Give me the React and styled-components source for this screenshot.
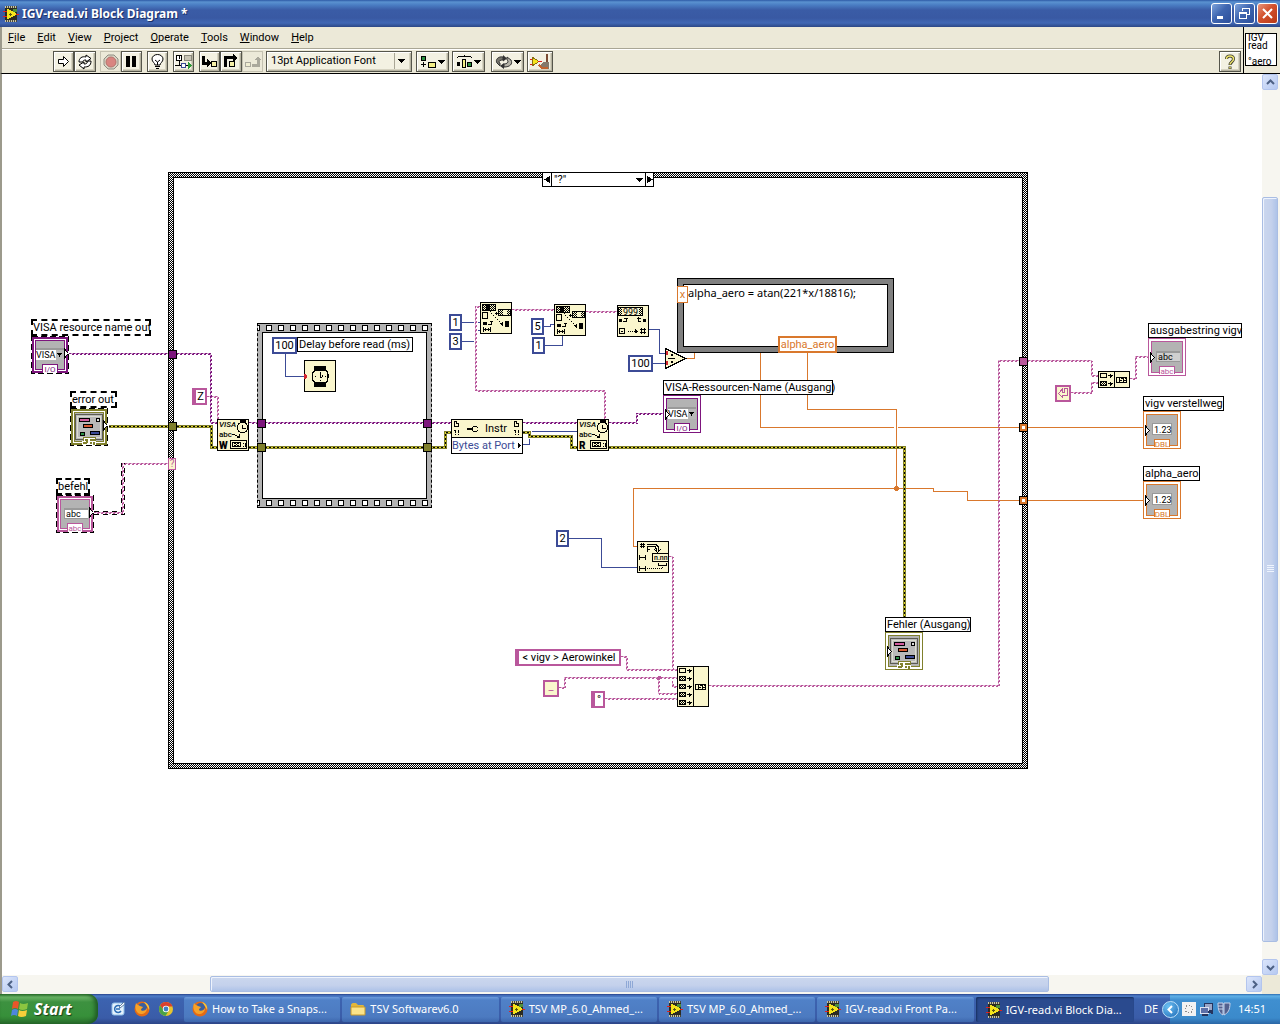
import styled, { createGlobalStyle, css } from 'styled-components';

const PINK = '#b9579c';
const PURPLE = '#7d157d';
const BLUE = '#3c4b96';
const ORANGE = '#d9782d';
const OLIVE = '#80802c';
const CREAM = '#faf6cd';
const UI_FONT = 'Roboto, sans-serif';
const WIDE_FONT = '"Noto Sans", sans-serif';

// the diagram uses window coordinates, the canvas starts here
const ORIGIN = { x: 2, y: 74 };

const GlobalStyle = createGlobalStyle`
  * { box-sizing: border-box; }
  body {
    margin: 0;
    font: 11px/14px ${UI_FONT};
    color: #000;
    overflow: hidden;
  }
  button, select { font: inherit; color: inherit; margin: 0; padding: 0; }
  svg { display: block; flex: none; }
`;

const Desktop = styled.div`
  display: flex;
  flex-direction: column;
  height: 100vh;
  background: #ece9d8;
`;

/* ---------- title bar ---------- */

const TitleBar = styled.header`
  display: flex;
  align-items: center;
  height: 27px;
  flex: none;
  padding: 0 2px 0 3px;
  background: linear-gradient(#2d5aa6 0, #5a92d0 2px, #4a7dc3 5px, #3a5ca6 10px, #3959a3 18px, #4067b4 23px, #2c4786 100%);
`;
const Title = styled.h1`
  flex: 1;
  margin: 0 0 0 3px;
  font: bold 12px/20px ${WIDE_FONT};
  color: #fff;
  text-shadow: 1px 1px #1b2f66;
`;
const WindowButton = styled.button`
  width: 21px;
  height: 21px;
  margin-left: 2px;
  border: 1px solid #fff;
  border-radius: 3px;
  display: grid;
  place-items: center;
  background: ${p => p.$close
    ? 'linear-gradient(135deg, #e8957c, #d2502c 45%, #b83a17)'
    : 'linear-gradient(135deg, #7ea4dc, #3f66b0 45%, #2c4f9b)'};
`;

/* ---------- menu and tool bar ---------- */

const Bars = styled.div`
  display: flex;
  flex: none;
  height: 47px;
  border-bottom: 1px solid #000;
  border-left: 2px solid #9c9a8c;
  background: #ece9d8;
`;
const BarColumn = styled.div`
  flex: 1;
`;
const MenuBar = styled.nav`
  display: flex;
  align-items: center;
  gap: 12px;
  height: 22px;
  padding: 0 6px;
  border-bottom: 1px solid #a9a695;
`;
const MenuItem = styled.button`
  border: 0;
  background: none;
  &::first-letter { text-decoration: underline; }
`;
const ToolBar = styled.div`
  display: flex;
  align-items: center;
  height: 24px;
  padding: 0 2px 0 51px;
  border-top: 1px solid #fff;
`;
const ToolButton = styled.button`
  display: flex;
  align-items: center;
  justify-content: center;
  width: ${p => p.$w || 21}px;
  height: 21px;
  margin-left: ${p => p.$gap || 0}px;
  border: 1px solid #55554b;
  background: #f3f1e2;
  box-shadow: inset 1px 1px #fff, inset -1px -1px #b5b2a0, inset -2px -2px #d6d3c1;
  ${p => p.$off && css`
    border-color: #c4c1b0;
    background: #ece9d8;
    box-shadow: none;
  `}
`;
const FontBox = styled.span`
  position: relative;
  display: flex;
  width: 146px;
  height: 21px;
  margin: 0 4px 0 3px;
  svg { position: absolute; right: 7px; top: 8px; }
`;
const FontSelect = styled.select`
  appearance: none;
  flex: 1;
  padding: 0 4px 1px;
  border: 1px solid #55554b;
  border-radius: 0;
  background: linear-gradient(90deg, #f3f1e2 127px, #a9a695 127px, #a9a695 128px, #f3f1e2 128px);
  box-shadow: inset 1px 1px #fff, inset -1px -1px #b5b2a0, inset -2px -2px #d6d3c1;
`;
const Spacer = styled.div`
  flex: 1;
`;
const ViIconPane = styled.div`
  width: 37px;
  padding: 6px 2px 0 1px;
  border-left: 1px solid #000;
`;
const ViIcon = styled.div`
  width: 32px;
  height: 33px;
  padding-left: 2px;
  border: 1px solid #000;
  background: #fff;
  font-size: 10px;
  line-height: 8px;
  white-space: pre;
`;

/* ---------- canvas and scroll bars ---------- */

const Workspace = styled.main`
  flex: 1;
  min-height: 0;
  display: grid;
  grid-template: minmax(0, 1fr) 19px / minmax(0, 1fr) 18px;
  border-left: 2px solid #9c9a8c;
`;
const Canvas = styled.section`
  position: relative;
  overflow: hidden;
  background: #fff;
`;
const ScrollBar = styled.div`
  display: flex;
  flex-direction: ${p => (p.$vertical ? 'column' : 'row')};
  padding: ${p => (p.$vertical ? '0 2px 0 0' : '1px 0 2px')};
  background: #f7f6f0;
`;
const ScrollButton = styled.button`
  flex: 0 0 16px;
  display: grid;
  place-items: center;
  border: 1px solid #b3c5ee;
  border-radius: 2px;
  background: linear-gradient(135deg, #dbe5fb, #b6c9f1);
`;
const Track = styled.div`
  flex: ${p => p.$grow} 0 0;
`;
const Thumb = styled.div`
  flex: ${p => p.$grow} 0 0;
  display: grid;
  place-items: center;
  border: 1px solid #a9bde3;
  border-radius: 2px;
  box-shadow: inset 1px 1px #eef3fd;
  background: linear-gradient(${p => (p.$vertical ? '90deg' : '180deg')}, #cbd7ee, #c4d1ec 60%, #aec3e8);
`;

/* ---------- diagram parts ---------- */

const place = css`
  position: absolute;
  left: ${p => p.$x - ORIGIN.x}px;
  top: ${p => p.$y - ORIGIN.y}px;
`;
const WireLayer = styled.svg`
  position: absolute;
  left: 0;
  top: 0;
  shape-rendering: crispEdges;
`;
const Node = styled.div`
  ${place}
`;
const Tag = styled.div`
  width: ${p => p.$w}px;
  height: ${p => (p.$selected ? 17 : 15)}px;
  padding-left: 1px;
  border: ${p => (p.$selected ? '2px dashed' : '1px solid')} #000;
  background: #fff;
  line-height: 13px;
  white-space: nowrap;
  ${p => p.$selected && css`
    padding-left: 0;
  `}
`;
const Placed = styled(Tag)`
  ${place}
`;
const Constant = styled.div`
  ${place}
  width: ${p => p.$w}px;
  height: 17px;
  border: 2px solid ${p => p.$color};
  border-left-width: ${p => (p.$string ? 4 : 2)}px;
  background: ${p => (p.$cream ? CREAM : '#fff')};
  color: ${p => (p.$cream ? p.$color : '#000')};
  line-height: ${p => (p.$cream ? 9 : 13)}px;
  text-align: center;
  white-space: nowrap;
`;
const Tunnel = styled.div`
  ${place}
  width: 9px;
  height: 9px;
  border: 1px solid #000;
  background: ${p => p.$color};
  ${p => p.$hollow && css`
    box-shadow: inset 0 0 0 2px ${p.$color};
    background: #fff;
  `}
`;
const Selector = styled.div`
  ${place}
  width: 8px;
  height: 12px;
  border: 1px solid ${PINK};
  background: ${CREAM};
  color: ${PINK};
  font-size: 10px;
  line-height: 10px;
  text-align: center;
`;
const CaseFrame = styled.div`
  ${place}
  width: 860px;
  height: 597px;
  padding: 4px;
  border: 1px solid #000;
  background: repeating-conic-gradient(#000 0 25%, #fff 0 50%) 0 0 / 2px 2px;
`;
const CaseBody = styled.div`
  height: 100%;
  border: 1px solid #000;
  background: #fff;
`;
const CaseBar = styled.div`
  ${place}
  display: flex;
  width: 112px;
  height: 15px;
  border: 1px solid #000;
  background: #fff;
  svg { pointer-events: none; }
`;
const CaseStep = styled.button`
  width: 8px;
  border: 0;
  border-left: ${p => (p.$next ? '1px solid #000' : 0)};
  background: #fff;
  display: grid;
  place-items: center;
`;
const CaseSelect = styled.select`
  appearance: none;
  flex: 1;
  min-width: 0;
  padding: 0 2px;
  border: 0;
  border-left: 1px solid #000;
  border-radius: 0;
  background: transparent;
  line-height: 13px;
`;
const CaseDrop = styled.span`
  display: grid;
  place-items: center;
  width: 11px;
`;
const SequenceFrame = styled.div`
  ${place}
  display: flex;
  flex-direction: column;
  width: 175px;
  height: 185px;
  border: 1px solid #000;
  border-left-style: dashed;
  border-right-style: dashed;
  background: #b3b3b3;
`;
const SequenceBody = styled.div`
  flex: 1;
  margin: 0 4px;
  border: 1px solid #000;
  background: #fff;
`;
const FormulaNode = styled.div`
  ${place}
  width: 217px;
  height: 75px;
  padding: 5px;
  border: 1px solid #000;
  background: #808080;
`;
const FormulaText = styled.div`
  height: 100%;
  padding: 1px 4px;
  border: 1px solid #000;
  background: #fff;
  font-family: ${WIDE_FONT};
`;
const Variable = styled.div`
  ${place}
  width: ${p => p.$w}px;
  height: 17px;
  border: ${p => p.$line}px solid ${ORANGE};
  background: #fff;
  color: ${ORANGE};
  line-height: ${p => 17 - p.$line * 2}px;
  text-align: center;
`;
const PropertyNode = styled.div`
  ${place}
  width: 72px;
  border: 1px solid #000;
  background: #fff;
`;
const PropertyHead = styled.div`
  display: flex;
  align-items: center;
  justify-content: space-between;
  height: 18px;
  padding: 0 2px;
  border-bottom: 1px solid #000;
  background: ${CREAM};
`;
const PropertyRow = styled.div`
  display: flex;
  align-items: center;
  justify-content: space-between;
  height: 15px;
  padding-right: 1px;
  color: ${BLUE};
  white-space: nowrap;
`;

/* ---------- task bar ---------- */

const TaskBar = styled.footer`
  flex: none;
  display: flex;
  height: 30px;
  font-family: ${WIDE_FONT};
  background: linear-gradient(#27428a 0, #4d7dc8 2px, #3c63b0 5px, #3a5ca8 24px, #2c4587 100%);
`;
const StartButton = styled.button`
  display: flex;
  align-items: center;
  gap: 4px;
  width: 98px;
  padding-left: 10px;
  border: 0;
  border-radius: 0 10px 10px 0;
  background: linear-gradient(#2f7a2f 0, #6cb567 3px, #3d9140 8px, #37903a 22px, #2a6e2c 100%);
  box-shadow: inset -3px 0 4px #1f5a24;
  color: #fff;
  font: italic bold 16px/24px ${WIDE_FONT};
  text-shadow: 1px 1px 1px #163f18;
`;
const QuickLaunch = styled.div`
  display: flex;
  align-items: center;
  gap: 8px;
  width: 86px;
  padding-left: 12px;
`;
const Tasks = styled.div`
  flex: 1;
  display: flex;
  gap: 2px;
  padding: 3px 0 2px;
`;
const Task = styled.button`
  flex: 1 0 0;
  min-width: 0;
  display: flex;
  align-items: center;
  gap: 4px;
  padding: 0 8px 1px;
  border: 0;
  border-radius: 2px;
  background: linear-gradient(#6d9bdb 0, #5081c8 3px, #4c7ac0 20px, #3d67ad 100%);
  color: #fff;
  white-space: nowrap;
  ${p => p.$active && css`
    background: #2a4a8e;
    box-shadow: inset 1px 1px 2px #17305f;
    padding-top: 2px;
    padding-left: 10px;
  `}
`;
const Language = styled.div`
  width: 36px;
  padding-left: 10px;
  color: #fff;
  line-height: 30px;
`;
const Tray = styled.div`
  display: flex;
  align-items: center;
  width: 110px;
  gap: 3px;
  padding-right: 14px;
  background: linear-gradient(#2c6bb0 0, #5fb0e6 2px, #3f8fd0 6px, #3b8acb 24px, #2a66a5 100%);
  color: #fff;
`;
const TrayToggle = styled.button`
  width: 17px;
  height: 17px;
  margin: 0 0 0 -8px;
  border: 1px solid #bfe2fa;
  border-radius: 50%;
  background: radial-gradient(circle at 35% 30%, #6cc0f2, #1e6cb8);
  display: grid;
  place-items: center;
`;
const Clock = styled.time`
  margin-left: auto;
`;

/* ---------- small drawings ---------- */

const Icon = ({ w = 16, h = w, vb, children, smooth }) => (
  <svg width={w} height={h} viewBox={vb || `0 0 ${w} ${h}`} fill="none" shapeRendering={smooth ? 'auto' : 'crispEdges'}>
    {children}
  </svg>
);

const Down = ({ w = 7 }) => (
  <svg width={w} height="4" viewBox="0 0 7 4" shapeRendering="crispEdges"><path d="M0 0h7v1h-1v1h-1v1h-1v1h-1v-1h-1v-1h-1v-1h-1z" /></svg>
);

const LabViewIcon = () => (
  <Icon w={16}>
    <path d="M2 2h12v12h-12z" fill="#2b2b22" />
    <path d="M2 1h12M2 15h12" stroke="#4a483a" strokeWidth="2" />
    <path d="M2 1h12M2 15h12" stroke="#c9c4a4" strokeWidth="2" strokeDasharray="1 1" />
    <path d="M10 3h4v3h-4z" fill="#4e8f3c" />
    <path d="M4 3h2v1h2v1h2v1h2v1h1v2h-1v1h-2v1h-2v1h-2v1h-2z" fill="#f5e51b" />
    <path d="M0 5.500h4M0 10.500h4M13 8.500h3" stroke="#e0211b" />
    <path d="M6 8.500h3M7.500 7v3" stroke="#5a5410" />
  </Icon>
);

const Firefox = () => (
  <Icon w={16} smooth>
    <circle cx="8" cy="8" r="7.500" fill="#e26a16" />
    <circle cx="8.500" cy="6.500" r="4.500" fill="#3b5f9f" />
    <path d="M2 2c1 2 3 2 4 3l3 1c-1 2-2 1-2 3 2 2 5 0 6-2 0 4-3 6-6 6-4 0-7-5-5-11z" fill="#f5a32a" />
    <path d="M10 1c4 1 6 5 5 8-1-3-3-5-5-8z" fill="#f7c63d" />
  </Icon>
);

const Chrome = () => (
  <Icon w={16} smooth>
    <circle cx="8" cy="8" r="7" fill="#e8c52e" />
    <path d="M2 4.500a7 7 0 0 1 12.500 1h-6.500l-2 4z" fill="#d8402f" />
    <path d="M2 4.500a7 7 0 0 0 5.500 10.500l3-5h-4z" fill="#4ba247" />
    <circle cx="8" cy="8" r="3.200" fill="#fff" />
    <circle cx="8" cy="8" r="2.400" fill="#3f7fc4" />
  </Icon>
);

const Folder = () => (
  <Icon w={16} smooth>
    <path d="M1 4c0-1 1-2 2-2h3l2 2h5c1 0 1 1 1 2v8h-13z" fill="#e2b63a" />
    <path d="M1 14v-8h14v8z" fill="#fbe48a" stroke="#c79a2b" />
  </Icon>
);

const QuickNote = () => (
  <Icon w={16} smooth>
    <rect x="2" y="2" width="12" height="12" rx="2" fill="#e4f1fc" stroke="#8fbfe8" />
    <path d="M11 6a3.500 3.500 0 1 0 0 4M6 8h4" stroke="#2b6cb5" strokeWidth="1.500" />
    <path d="M9 6l5-5 1 2-5 4z" fill="#fff" stroke="#5d7fa8" />
  </Icon>
);

const WindowsFlag = () => (
  <Icon w={20} smooth>
    <path d="M3 3q3-2 6 0l-1 7q-3-2-6 0z" fill="#e8562a" />
    <path d="M10 4q3 2 8 0l-1 6q-5 2-8 0z" fill="#8cc540" />
    <path d="M2 11q3-2 6 0l-1 6q-3-2-6 0z" fill="#4f86dd" />
    <path d="M9 11q3 2 8 0l-1 6q-5 2-8 0z" fill="#f6cf3a" />
  </Icon>
);

const Chevron = ({ turn }) => (
  <svg width="9" height="9" viewBox="0 0 9 9" fill="none">
    <path d="M6 1L2.500 4.500L6 8" stroke="#4d6185" strokeWidth="2" transform={`rotate(${turn} 4.500 4.500)`} />
  </svg>
);

/* ---------- wires ---------- */

// string and VISA wires: two dashed rows, one pixel apart
const Braid = ({ d, color }) => (
  <g fill="none" stroke={color}>
    <path d={d} strokeDasharray="2 2" />
    <path d={d} transform="translate(1 1)" strokeDasharray="2 2" strokeDashoffset="2" />
    <path d={d} strokeOpacity="0.450" />
  </g>
);

const ErrorWire = ({ d }) => (
  <g fill="none">
    <path d={d} stroke={OLIVE} strokeWidth="3" />
    <path d={d} stroke="#e3d72a" />
    <path d={d} stroke="#000" strokeDasharray="2 2" />
  </g>
);

const purpleWires = [
  'M69 353.5H210.5V422.500H217',
  'M249 422.500H451',
  'M523 422.500H577',
  'M609 422.500H636.500V413.500H663',
];
const pinkWires = [
  'M207 396.500H217.500V419',
  'M94 512.500H122.500V463.500H168',
  'M480 306.500H475.500V390.500H604.500V419',
  'M512 309.500H554',
  'M586 311.500H617',
  'M669 556.500H672.500V668M672.500 681V686.500H677',
  'M621 656.500H626.500V669.500H677',
  'M559 687.500H564.500V677.500H677',
  'M658.500 678V693.500H677',
  'M605 698.500H677',
  'M709 685.500H998.500V360.500H1091.500V375.500H1098',
  'M1071 392.500H1091.500V382.500H1098',
  'M1130 378.500H1135.500V356.500H1148',
];
const errorWires = [
  'M109 426.500H211.500V447.500H217',
  'M249 447.500H445.500V432.500H451',
  'M523 432.500H529.500V436.500H571.500V447.500H577',
  'M609 447.500H904.500V617',
];
const blueWires = [
  'M285.500 354V376.500H304',
  'M462 322.500H474M478 322.500H480M478 330.500H480',
  'M462 341.500H474',
  'M544 326.500H550.500V324.500H554',
  'M545 345.500H562.500V336',
  'M649 329.500H659.500V353.500H666',
  'M653 363.500H666',
  'M523 444.500H529.500V439M532 431.500H577',
  'M569 538.500H601.500V567.500H637',
];
const orangeWires = [
  'M686 358.500H694.500V352',
  'M760.500 353V427.500H894M898 427.500H1143',
  'M807.500 353V409.500H896.500V488.500',
  'M637 546.500H633.500V488.500H933.500V491.500H967.500V500.500H1143',
];

const Wires = () => (
  <WireLayer width="100%" height="100%">
    <g transform={`translate(${-ORIGIN.x} ${-ORIGIN.y})`}>
      {blueWires.map(d => <path key={d} d={d} fill="none" stroke={BLUE} />)}
      {orangeWires.map(d => <path key={d} d={d} fill="none" stroke={ORANGE} />)}
      {pinkWires.map(d => <Braid key={d} d={d} color={PINK} />)}
      {purpleWires.map(d => <Braid key={d} d={d} color={PURPLE} />)}
      {errorWires.map(d => <ErrorWire key={d} d={d} />)}
      <path d="M94 514.500H124.500V463M94 511.500H121.500V463" fill="none" stroke="#000" strokeDasharray="5 4" />
      <circle cx="896.500" cy="488.500" r="2.500" fill={ORANGE} />
      <circle cx="659" cy="678" r="2" fill={PINK} />
    </g>
  </WireLayer>
);

/* ---------- terminals ---------- */

const smallText = { fontFamily: UI_FONT, stroke: 'none' };

const InArrow = () => <path d="M2.500 15v9l4-4.500z" fill="#fff" stroke="#000" />;
const OutArrow = () => <path d="M33.500 13v9l4-4.500z" fill="#fff" stroke="#000" />;

const VisaFace = () => (
  <>
    <path d="M5 12h28v3h-28z" fill="#999" />
    <path d="M5 14h20v10h-20z" fill="#fff" />
    <text x="5" y="22" fontSize="9" fill="#000" {...smallText}>VISA</text>
    <path d="M25 14h8v10h-8z" fill="#b9b9b9" />
    <path d="M26 17h5l-2.500 4z" fill="#000" />
  </>
);
const NumberFace = () => (
  <>
    <path d="M9 12h20v12h-20z" fill="#999" />
    <path d="M10 13h18v10h-18z" fill="#fff" />
    <text x="11" y="22" fontSize="9" fill="#000" {...smallText}>1.23</text>
  </>
);
const StringFace = ({ white }) => (
  <>
    <path d="M8 13h24v11h-24z" fill="#999" />
    <path d="M9 15h23v8h-23z" fill={white ? '#fff' : '#cfcfcf'} />
    <text x="10" y="22" fontSize="9" fill="#000" {...smallText}>abc</text>
  </>
);
const ErrorFace = () => (
  <>
    <path d="M5.500 6.500h27v25h-27z" fill="#b9b9b9" stroke="#5c5c52" />
    <path d="M7.500 8.500h23v21h-23z" stroke="#dcdcd0" />
    <path d="M9.500 10.500h10v3h-10z" fill="#d45d9f" stroke="#000" />
    <path d="M26.500 10.500h3v3h-3z" fill="#ddd" stroke="#000" />
    <path d="M13.500 16.500h9v3h-9z" fill="#d65a33" stroke="#000" />
    <path d="M20.500 23.500h9v3h-9z" fill="#3c4b96" stroke="#000" />
    <path d="M10.500 24.500h4v3h-4z" fill="#2a9147" stroke="#000" />
  </>
);

const Terminal = ({ x, y, label, w, color, tag, selected, out, children }) => (
  <Node $x={x} $y={y}>
    <Tag $w={w} $selected={selected}>{label}</Tag>
    <Icon w={38}>
      <rect x="0.500" y="0.500" width="37" height="37" fill={selected ? color : '#fff'} stroke={color} />
      {selected && <rect x="3.500" y="3.500" width="31" height="31" fill={color} stroke="#fff" />}
      <rect
        x={selected ? 4.5 : 3.5}
        y={selected ? 4.5 : 3.5}
        width={selected ? 29 : 31}
        height={selected ? 29 : 31}
        fill="#b3b3b3"
        stroke={color}
      />
      {children}
      <path d={tag ? 'M11.500 36v-7.500h15v7.500' : 'M13.500 34v-4.500h12v4.500'} fill="#fff" stroke={color} />
      <path d="M12 33h14v4h-14z" fill="#fff" />
      {tag
        ? <text x="19" y="36" fontSize="8" textAnchor="middle" fill={color} {...smallText}>{tag}</text>
        : <path d="M13 35h4M15 32h2v3M20 32h5M20 35h2M24 34v3" stroke={color} strokeWidth="2" />}
      {out ? <OutArrow /> : <InArrow />}
      {selected && <rect x="0.500" y="0.500" width="37" height="37" stroke="#fff" />}
      {selected && <rect x="0.500" y="0.500" width="37" height="37" stroke="#000" strokeDasharray="6 3" />}
    </Icon>
  </Node>
);

/* ---------- function nodes ---------- */

const Box = ({ x, y, h = 32, children }) => (
  <Node $x={x} $y={y}>
    <Icon w={32} h={h}>
      <rect x="0.500" y="0.500" width="31" height={h - 1} fill={CREAM} stroke="#000" />
      {children}
    </Icon>
  </Node>
);

const VisaFunction = ({ x, y, letter }) => (
  <Box x={x} y={y}>
    <text x="2" y="8" fontSize="8" fontStyle="italic" fontWeight="500" fill="#000" {...smallText}>VISA</text>
    <text x="2" y="18" fontSize="8" fontWeight="500" fill="#000" {...smallText}>abc</text>
    <text x="2" y="30" fontSize="10" fontWeight="900" fill="#000" {...smallText}>{letter}</text>
    <path d="M23 1h6v3h-6zM23 3h5v1h2v2h1v5h-1v2h-2v1h-5v-1h-2v-2h-1v-5h1v-2h2z" fill="#000" />
    <path d="M23 4h5v1h1v1h1v5h-1v1h-1v1h-5v-1h-1v-1h-1v-5h1v-1h1z" fill={CREAM} />
    <path d="M25.500 6v3.500h3" stroke="#000" />
    <path d="M15 15.500h3M18 16.500h2M20 17.500h2M22.500 15v4M20 18.500h3" stroke="#000" />
    <path d="M13.500 21.500h16v8h-16z" stroke="#000" />
    <path d="M15.500 23.500h8v4h-8zM17 24l5 3M17 27l5-3M26.500 24v1M26.500 27v1M28 24v4" stroke="#000" />
  </Box>
);

const Hatch = ({ x, y, w, h }) => (
  <>
    <rect x={x} y={y} width={w} height={h} fill="url(#hatch)" />
    <rect x={x + 0.5} y={y + 0.5} width={w - 1} height={h - 1} stroke="#000" />
  </>
);

const SubsetFunction = ({ x, y }) => (
  <Box x={x} y={y}>
    <Hatch x={2} y={2} w={14} h={7} />
    <path d="M6 2h4v7h-4z" fill="#000" />
    <Hatch x={18} y={7} w={13} h={7} />
    <path d="M23 8h4v5h-4z" fill={CREAM} />
    <path d="M2.500 10.500h5v6h-5z" stroke="#000" />
    <path d="M10 9.500h1M11 11.500h1M13 13.500h1M15 15.500h1M17 17.500h1M19 19.500h1M20 21.500h2M21 22.500h2M22 20v4M15 11.500h4M16.500 10v3" stroke="#000" />
    <path d="M25 19h4v6h-4z" fill="#000" />
    <path d="M3 20h4v3h-4z" fill="#000" />
    <path d="M8 22.500h3v-3M10 19.500h3M3.500 25v5M10.500 25v5M4 27.500h7M5.500 26v3M8.500 26v3" stroke="#000" />
  </Box>
);

const ConcatRow = ({ y, full }) => (
  <>
    <path d={`M2.500 ${y + 0.5}h6v4h-6z`} fill={full ? 'url(#hatch)' : CREAM} stroke="#000" />
    <path d={`M10 ${y + 2.5}h5M12.500 ${y + 0.5}v4M13.500 ${y + 1.5}v2`} stroke="#000" />
  </>
);
const ConcatOut = ({ y }) => (
  <>
    <path d="M16.500 0v60" stroke="#000" />
    <path d={`M18.500 ${y + 0.5}h10v5h-10z`} fill={CREAM} stroke="#000" />
    <path d={`M21.500 ${y}v6M25.500 ${y}v6M23 ${y + 1.5}h2M22 ${y + 3.5}h2M26 ${y + 3.5}h2M27 ${y + 1.5}h1`} stroke="#000" />
  </>
);

const Diagram = () => (
  <Canvas>
    <svg width="0" height="0" style={{ position: 'absolute' }}>
      <defs>
        <pattern id="hatch" width="2" height="2" patternUnits="userSpaceOnUse">
          <rect width="2" height="2" fill={CREAM} />
          <path d="M0 0h1v1h-1zM1 1h1v1h-1z" />
        </pattern>
        <pattern id="sprocket" x="5" width="12" height="8" patternUnits="userSpaceOnUse">
          <rect x="3.500" y="1.500" width="5" height="5" fill="#fff" stroke="#000" />
        </pattern>
      </defs>
    </svg>

    <CaseFrame $x={168} $y={172}><CaseBody /></CaseFrame>
    <SequenceFrame $x={257} $y={323}>
      <Icon w={173} h={8}><rect width="173" height="8" fill="url(#sprocket)" /></Icon>
      <SequenceBody />
      <Icon w={173} h={8}><rect width="173" height="8" fill="url(#sprocket)" /></Icon>
    </SequenceFrame>

    <Wires />

    <CaseBar $x={542} $y={172}>
      <CaseStep aria-label="Previous case"><Icon w={6} h={7}><path d="M6 0v7l-6-3.500z" fill="#000" /></Icon></CaseStep>
      <CaseSelect aria-label="Case" defaultValue="q"><option value="q">"?"</option></CaseSelect>
      <CaseDrop><Down /></CaseDrop>
      <CaseStep aria-label="Next case" $next><Icon w={6} h={7}><path d="M0 0v7l6-3.500z" fill="#000" /></Icon></CaseStep>
    </CaseBar>

    <Terminal x={31} y={319} w={120} label="VISA resource name out" color={PURPLE} tag="I/O" selected out><VisaFace /></Terminal>
    <Terminal x={70} y={391} w={47} label="error out" color={OLIVE} selected out><ErrorFace /></Terminal>
    <Terminal x={56} y={478} w={34} label="befehl" color={PINK} tag="abc" selected out><StringFace white /></Terminal>
    <Terminal x={1148} y={323} w={94} label="ausgabestring vigv" color={PINK} tag="abc"><StringFace /></Terminal>
    <Terminal x={1143} y={396} w={81} label="vigv verstellweg" color={ORANGE} tag="DBL"><NumberFace /></Terminal>
    <Terminal x={1143} y={466} w={57} label="alpha_aero" color={ORANGE} tag="DBL"><NumberFace /></Terminal>
    <Terminal x={663} y={380} w={170} label="VISA-Ressourcen-Name (Ausgang)" color={PURPLE} tag="I/O"><VisaFace /></Terminal>
    <Terminal x={885} y={617} w={86} label="Fehler (Ausgang)" color={OLIVE}><ErrorFace /></Terminal>

    <Placed $x={297} $y={337} $w={116}>Delay before read (ms)</Placed>
    <Constant $x={272} $y={337} $w={25} $color={BLUE}>100</Constant>
    <Constant $x={449} $y={314} $w={13} $color={BLUE}>1</Constant>
    <Constant $x={449} $y={333} $w={13} $color={BLUE}>3</Constant>
    <Constant $x={531} $y={318} $w={13} $color={BLUE}>5</Constant>
    <Constant $x={532} $y={337} $w={13} $color={BLUE}>1</Constant>
    <Constant $x={628} $y={355} $w={25} $color={BLUE}>100</Constant>
    <Constant $x={556} $y={530} $w={13} $color={BLUE}>2</Constant>
    <Constant $x={192} $y={388} $w={15} $color={PINK} $string>Z</Constant>
    <Constant $x={515} $y={649} $w={106} $color={PINK} $string>&lt; vigv &gt; Aerowinkel</Constant>
    <Constant $x={543} $y={680} $w={16} $color={PINK} $cream>_</Constant>
    <Constant $x={591} $y={691} $w={14} $color={PINK} $string>°</Constant>
    <Constant $x={1055} $y={385} $w={16} $color={PINK} $cream>
      <Icon w={12}><path d="M5.500 2v3h2v-3.500h3v6.500h-5v2.500l-4-4z" stroke={PINK} /></Icon>
    </Constant>

    <Box x={304} y={360}>
      <path d="M10 6h12v5h-12zM10 22h12v5h-12z" fill="#000" />
      <path d="M10 10h12l2 2v2h1v4h-1v3l-2 2h-12l-2-2v-9z" fill="#000" />
      <path d="M11 11h10l2 2v7l-2 2h-10l-2-2v-7z" fill={CREAM} />
      <path d="M16.500 12v6M16 17.500h2M18.500 15v2M11 16.500h1M21 16.500h1M16 20.500h1" stroke="#000" />
      <path d="M0 14h2v1h1v3h-1v1h-2z" fill="#d22630" />
    </Box>
    <VisaFunction x={217} y={419} letter="W" />
    <VisaFunction x={577} y={419} letter="R" />
    <SubsetFunction x={480} y={302} />
    <SubsetFunction x={554} y={304} />
    <Box x={617} y={305}>
      <Hatch x={1} y={2} w={25} h={9} />
      <path d="M5 3h17v7h-17z" fill={CREAM} />
      <text x="6" y="10" fontSize="9" fill="#000" {...smallText}>999</text>
      <path d="M2 14h3v3h-3zM26 14h3v3h-3z" fill="#000" />
      <path d="M6 16.500h3v-4M7 13.500h4M20 13.500h4M21.500 12v4h2M2.500 23.500h5v5h-5zM4 26.500h2M11 26.500h8M23 24.500h6M23 27.500h6M24.500 23v6M27.500 23v6" stroke="#000" />
      <path d="M12 26.500h6" stroke={CREAM} strokeDasharray="1 1" />
      <path d="M18 24l3 2.500l-3 2z" fill="#000" />
    </Box>
    <Node $x={665} $y={348}>
      <Icon w={22} h={21}>
        <path d="M0.500 0.500v20l20-10z" fill={CREAM} stroke="#000" />
        <path d="M1 3h2v4h-2zM1 13h2v4h-2z" fill="#d22630" />
        <path d="M3 10.500h7" stroke="#000" />
        <path d="M5.500 7h2M5.500 14h2" stroke="#000" strokeWidth="2" />
      </Icon>
    </Node>
    <Box x={637} y={541}>
      <path d="M3 3.500h5M3 5.500h5M4.500 2v5M6.500 2v5" stroke="#000" />
      <path d="M10.500 5v6M10 5.500h4M10 8.500h3" stroke="#000" />
      <path d="M10 3.500h9l2 2v4M14 5.500h4l1 2v2M17 8l3.500 3.500l3.500-3.500" stroke="#000" />
      <path d="M15.500 12.500h16v8h-16z" fill={CREAM} stroke="#000" />
      <text x="17" y="19" fontSize="7" fontWeight="500" fill="#000" {...smallText}>n.nn</text>
      <path d="M2.500 14v5M8.500 14v5M3 16.500h6M2.500 25v5M8.500 25v5M3 27.500h6M21.500 22v2h8v-2" stroke="#000" />
      <path d="M10 27.500h15v-4" stroke="#000" strokeDasharray="1 1" />
    </Box>
    <Box x={677} y={666} h={41}>
      {[2, 10, 18, 26, 34].map(y => <ConcatRow key={y} y={y} full={y > 2} />)}
      <ConcatOut y={18} />
      <path d="M0 40.500h32" stroke="#000" />
    </Box>
    <Box x={1098} y={371} h={17}>
      <ConcatRow y={2} />
      <ConcatRow y={10} full />
      <ConcatOut y={6} />
      <path d="M0 16.500h32" stroke="#000" />
    </Box>

    <PropertyNode $x={451} $y={419}>
      <PropertyHead>
        <Icon w={6} h={15}><path d="M0.500 0.500h2v2h2v3h-4zM0 9.500h2M1.500 9v3M1.500 13v1M4.500 9v3M4.500 13v1" stroke="#000" /></Icon>
        <Icon w={11} h={8}><path d="M0 4h6" stroke="#000" strokeWidth="2" /><path d="M5.500 2v4M6 1.500h4M6 6.500h4M10.500 2v1M10.500 5v1" stroke="#000" /></Icon>
        <span>Instr</span>
        <Icon w={6} h={15}><path d="M0.500 0.500h2v2h2v3h-4zM0 9.500h2M1.500 9v3M1.500 13v1M4.500 9v3M4.500 13v1" stroke="#000" /></Icon>
      </PropertyHead>
      <PropertyRow>Bytes at Port <Icon w={3} h={7}><path d="M0 0v7l3-3.500z" fill="#000" /></Icon></PropertyRow>
    </PropertyNode>

    <FormulaNode $x={677} $y={278}>
      <FormulaText>alpha_aero = atan(221*x/18816);</FormulaText>
    </FormulaNode>
    <Variable $x={677} $y={286} $w={11} $line={1}>x</Variable>
    <Variable $x={778} $y={336} $w={59} $line={2}>alpha_aero</Variable>

    <Tunnel $x={168} $y={350} $color={PURPLE} />
    <Tunnel $x={168} $y={422} $color={OLIVE} />
    <Selector $x={168} $y={458}>?</Selector>
    <Tunnel $x={257} $y={419} $color={PURPLE} />
    <Tunnel $x={257} $y={443} $color={OLIVE} />
    <Tunnel $x={423} $y={419} $color={PURPLE} />
    <Tunnel $x={423} $y={443} $color={OLIVE} />
    <Tunnel $x={1019} $y={357} $color={PINK} />
    <Tunnel $x={1019} $y={423} $color={ORANGE} $hollow />
    <Tunnel $x={1019} $y={496} $color={ORANGE} $hollow />
  </Canvas>
);

/* ---------- window ---------- */

const Tools = () => (
  <ToolBar>
    <ToolButton aria-label="Run"><Icon w={13} smooth><path d="M1.500 4.500h5v-3l5 5l-5 5v-3h-5z" fill="#fff" stroke="#000" /></Icon></ToolButton>
    <ToolButton aria-label="Run continuously" $w={22}>
      <Icon w={16} smooth>
        <path d="M2 8c0-4 3-6 7-5v-2l5 3.500l-5 3.500v-2c-3 0-3 1-3 2z" fill="#fff" stroke="#000" />
        <path d="M14 7c0 5-3 6-7 6v2l-5-4l5-3v2c3 0 3-1 4-3z" fill="#fff" stroke="#000" />
      </Icon>
    </ToolButton>
    <ToolButton aria-label="Abort" $off $gap={4}>
      <Icon w={16} smooth><path d="M5 1h6l4 4v6l-4 4h-6l-4-4v-6z" fill="#d8d5c5" stroke="#8f8d82" /><circle cx="8" cy="8" r="5" fill="#d98580" stroke="#b5736c" /></Icon>
    </ToolButton>
    <ToolButton aria-label="Pause"><Icon w={11}><path d="M0 0h4v11h-4zM6 0h4v11h-4z" fill="#000" /></Icon></ToolButton>
    <ToolButton aria-label="Highlight execution" $gap={5}>
      <Icon w={13} h={16} smooth><path d="M4 11c0-2-3-3-3-6a5.500 4.500 0 0 1 11 0c0 3-3 4-3 6z" fill="#fff" stroke="#000" /><path d="M4 6l2.500 2l2.500-2M6.500 8v3M4 12.500h5M5 14.500h3" stroke="#000" /></Icon>
    </ToolButton>
    <ToolButton aria-label="Retain wire values" $gap={5}>
      <Icon w={17} h={15}>
        <circle cx="4" cy="4" r="3" fill="#fff" stroke="#000" /><path d="M4 2v3M4 7v5" stroke="#000" />
        <path d="M9.500 1.500h7v5h-7z" fill="#c8c5b5" stroke="#8a887c" />
        <path d="M0 11.500h17" stroke="#000" /><path d="M6.500 9.500h4v4h-4z" fill="#fff" stroke="#3c4b96" />
        <path d="M13 8l4 3.500l-4 3.500z" fill="#2d9b38" />
      </Icon>
    </ToolButton>
    <ToolButton aria-label="Step into" $gap={5}>
      <Icon w={17} h={15}><path d="M2 2v7h5" stroke="#000" strokeWidth="3" /><path d="M6 5l4 4l-4 4z" fill="#000" /><path d="M10.500 7.500h5v5h-5z" fill="#f5efa6" stroke="#000" /></Icon>
    </ToolButton>
    <ToolButton aria-label="Step over" $w={22}>
      <Icon w={17} h={15}><path d="M2 13v-10h9" stroke="#000" strokeWidth="3" /><path d="M10 0l5 4l-5 4z" fill="#000" /><path d="M6.500 7.500h5v5h-5z" fill="#f5efa6" stroke="#000" /></Icon>
    </ToolButton>
    <ToolButton aria-label="Step out" $off>
      <Icon w={17} h={15}><path d="M8 11h6v-6" stroke="#aaa89c" strokeWidth="3" /><path d="M10 6l4-4l3 4z" fill="#aaa89c" /><path d="M1.500 8.500h5v4h-5z" fill="#f0edd2" stroke="#aaa89c" /></Icon>
    </ToolButton>
    <FontBox>
      <FontSelect aria-label="Text settings" defaultValue="f"><option value="f">13pt Application Font</option></FontSelect>
      <Down />
    </FontBox>
    <ToolButton aria-label="Align objects" $w={33}>
      <Icon w={18} h={14}><path d="M1.500 1.500h4v4h-4z" fill="#2b8f3f" stroke="#000" /><path d="M3.500 7v5M1 9.500h5" stroke="#000" /><path d="M8.500 7.500h7v5h-7z" fill="#f3ee86" stroke="#000" /></Icon><Down />
    </ToolButton>
    <ToolButton aria-label="Distribute objects" $w={33} $gap={3}>
      <Icon w={18} h={14}><path d="M1 2.500l2-1h11l2 1M8.500 0v2" stroke="#000" /><path d="M1 7h3v4h-3z" fill="#000" /><path d="M6.500 4.500h3v8h-3z" fill="#f3ee86" stroke="#000" /><path d="M11.500 7.500h4v4h-4z" fill="#2b8f3f" stroke="#000" /></Icon><Down />
    </ToolButton>
    <ToolButton aria-label="Reorder" $w={33} $gap={6}>
      <Icon w={19} h={14} smooth><path d="M8 2c-5-1-8 3-6 6l3 3v-3c-2-1-1-3 3-3z" fill="#77766e" stroke="#333" /><path d="M9 12c6 0 9-3 7-7l-4-3v3c2 1 1 4-3 4z" fill="#b5b3a8" stroke="#333" /><path d="M8 0l4 3.500l-4 3zM9 8v6l-4-3z" fill="#333" /></Icon><Down />
    </ToolButton>
    <ToolButton aria-label="Clean up diagram" $w={26} $gap={3}>
      <Icon w={20} h={16}><path d="M2 3v9l7-4.500z" fill="#f5e51b" stroke="#8a6d10" /><path d="M0 5.500h2M0 10.500h2M8 7.500h4" stroke="#e0211b" /><path d="M16 0h2v8h-2z" fill="#7b4b34" /><path d="M13 8h6v7h-4l-6-3z" fill="#85796a" /><path d="M9 11l3 3h6" stroke="#c2642e" strokeWidth="2" /></Icon>
    </ToolButton>
    <Spacer />
    <ToolButton aria-label="Context help" $w={22}>
      <Icon w={12} h={16} smooth><path d="M2.500 5c0-4 7-4 7 0 0 3-3.500 3-3.500 6M6 12.500v2.500" stroke="#3a3a2c" strokeWidth="3" /><path d="M2.500 5c0-4 7-4 7 0 0 3-3.500 3-3.500 5.500M6 13v1.500" stroke="#efe56b" strokeWidth="1.500" /></Icon>
    </ToolButton>
  </ToolBar>
);

const tasks = [
  [Firefox, 'How to Take a Snaps...'],
  [Folder, 'TSV Softwarev6.0'],
  [LabViewIcon, 'TSV MP_6.0_Ahmed_...'],
  [LabViewIcon, 'TSV MP_6.0_Ahmed_...'],
  [LabViewIcon, 'IGV-read.vi Front Pa...'],
  [LabViewIcon, 'IGV-read.vi Block Dia...'],
];

export default function App() {
  return (
    <Desktop>
      <GlobalStyle />
      <TitleBar>
        <LabViewIcon />
        <Title>IGV-read.vi Block Diagram *</Title>
        <WindowButton aria-label="Minimize"><Icon w={13}><path d="M2 9h6v3h-6z" fill="#fff" /></Icon></WindowButton>
        <WindowButton aria-label="Restore"><Icon w={13}><path d="M4.500 4v-2.500h7v6h-2.500M1.500 5.500h7v6h-7zM1 6.500h8" stroke="#fff" /></Icon></WindowButton>
        <WindowButton aria-label="Close" $close><Icon w={13} smooth><path d="M2 2l9 9M11 2l-9 9" stroke="#fff" strokeWidth="2" /></Icon></WindowButton>
      </TitleBar>
      <Bars>
        <BarColumn>
          <MenuBar>
            {['File', 'Edit', 'View', 'Project', 'Operate', 'Tools', 'Window', 'Help'].map(m => <MenuItem key={m}>{m}</MenuItem>)}
          </MenuBar>
          <Tools />
        </BarColumn>
        <ViIconPane><ViIcon>{'IGV\nread\n\n°aero'}</ViIcon></ViIconPane>
      </Bars>
      <Workspace>
        <Diagram />
        <ScrollBar $vertical>
          <ScrollButton aria-label="Scroll up"><Chevron turn={90} /></ScrollButton>
          <Track $grow={107} />
          <Thumb $grow={744} $vertical><Icon w={7} h={8}><path d="M0 0.500h7M0 2.500h7M0 4.500h7M0 6.500h7" stroke="#eef4fe" /></Icon></Thumb>
          <Track $grow={17} />
          <ScrollButton aria-label="Scroll down"><Chevron turn={-90} /></ScrollButton>
        </ScrollBar>
        <ScrollBar>
          <ScrollButton aria-label="Scroll left"><Chevron turn={0} /></ScrollButton>
          <Track $grow={192} />
          <Thumb $grow={838}><Icon w={8} h={7}><path d="M0.500 0v7M2.500 0v7M4.500 0v7M6.500 0v7" stroke="#8ea8d6" /></Icon></Thumb>
          <Track $grow={197} />
          <ScrollButton aria-label="Scroll right"><Chevron turn={180} /></ScrollButton>
        </ScrollBar>
      </Workspace>
      <TaskBar>
        <StartButton><WindowsFlag />Start</StartButton>
        <QuickLaunch><QuickNote /><Firefox /><Chrome /></QuickLaunch>
        <Tasks>
          {tasks.map(([TaskIcon, name], i) => <Task key={i} $active={i === 5}><TaskIcon />{name}</Task>)}
        </Tasks>
        <Language>DE</Language>
        <Tray>
          <TrayToggle aria-label="Show hidden icons"><Icon w={7} h={9} smooth><path d="M5 1l-3.500 3.500l3.500 3.500" stroke="#fff" strokeWidth="2" /></Icon></TrayToggle>
          <Icon w={14}><path d="M0 0h14v14h-14z" fill="#f2f2f2" /><circle cx="7" cy="7" r="4" stroke="#8b8b8b" strokeDasharray="1 2" /></Icon>
          <Icon w={15}><path d="M5 1h8v7h-8z" fill="#9aa6c8" stroke="#26345e" /><path d="M1 5h8v6h-8z" fill="#5d70a8" stroke="#dde3f3" /><path d="M3 13h6M9 10h4v2" stroke="#26345e" strokeWidth="2" /></Icon>
          <Icon w={14} smooth><path d="M1 1h5v12c-4-2-5-5-5-12zM7 1h6c0 7-2 10-6 12z" fill="#52618f" stroke="#c9d3ea" /><path d="M1 4h5M1 7h5" stroke="#c9d3ea" /></Icon>
          <Clock>14:51</Clock>
        </Tray>
      </TaskBar>
    </Desktop>
  );
}
